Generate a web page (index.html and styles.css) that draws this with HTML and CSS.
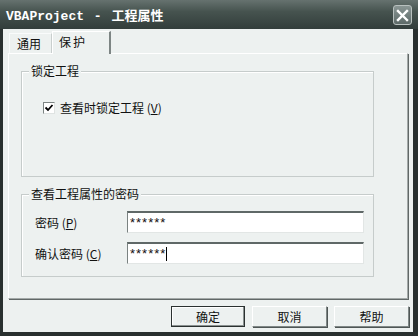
FILE: index.html
```html
<!DOCTYPE html>
<html lang="zh-CN">
<head>
<meta charset="UTF-8">
<title>VBAProject - 工程属性</title>
<link rel="stylesheet" href="styles.css">
</head>
<body>

<div class="window">
  <div class="titlebar">
    <span class="title">VBAProject - 工程属性</span>
    <span class="close"><svg width="13" height="13" viewBox="0 0 13 13"><path d="M2 2L11 11M11 2L2 11" stroke="#fff" stroke-width="2.4" stroke-linecap="square"/></svg></span>
  </div>

  <div class="client">
    <div class="tabs">
      <div class="tab">通用</div>
      <div class="tab active">保护</div>
    </div>

    <div class="page">
      <div class="group g1">
        <div class="group-title">锁定工程</div>
        <label class="check-row">
          <span class="checkbox"><svg width="10" height="10" viewBox="0 0 10 10"><path d="M1.5 4.5L4 7L8.5 2" fill="none" stroke="#000" stroke-width="1.8"/></svg></span>
          <span>查看时锁定工程 (<u>V</u>)</span>
        </label>
      </div>

      <div class="group g2">
        <div class="group-title">查看工程属性的密码</div>
        <div class="field">
          <span class="field-label">密码 (<u>P</u>)</span>
          <span class="input">******</span>
        </div>
        <div class="field">
          <span class="field-label">确认密码 (<u>C</u>)</span>
          <span class="input">******<span class="caret"></span></span>
        </div>
      </div>
    </div>

    <div class="buttons">
      <div class="btn default">确定</div>
      <div class="btn">取消</div>
      <div class="btn">帮助</div>
    </div>
  </div>
</div>

</body>
</html>
```

FILE: styles.css
```css
html,body { margin:0; padding:0; background:#262e2d; font-family:"Noto Sans CJK SC","Liberation Sans",sans-serif; font-size:12px; color:#111; }
.window { width:418px; height:336px; background:#29302f; display:flex; flex-direction:column; }

.titlebar { height:29px; flex:none; display:flex; align-items:center; justify-content:space-between; padding:0 6px;
  background:linear-gradient(#66726f,#46534f 40%,#323d3b); }
.title { color:#fff; font-family:"Liberation Mono","Noto Sans CJK SC",monospace; font-weight:bold; font-size:13px; word-spacing:2px; }
.close { width:17px; height:18px; margin-top:1px; border:1px solid #b8c0be; border-radius:3px; display:flex; align-items:center; justify-content:center;
  background:linear-gradient(#8a9694,#5d6a68); }

.client { flex:1; margin:0 5px 4px 3px; background:#edf1f0; padding:3px 0 0 5px; }

.tabs { display:flex; height:21px; padding-left:1px; align-items:flex-end; }
.tab { height:19px; line-height:19px; padding:0 10px 0 7px; border:1px solid #f9fbfb; border-bottom:none; border-right:1px solid #c9cfce; }
.tab.active { position:relative; height:22px; line-height:20px; margin-bottom:-1px; padding:0 22px 0 6px; background:#edf1f0; letter-spacing:2px;
  border-left:1px solid #fff; border-top:1px solid #fff; border-right:2px solid #7d8584; }

.page { width:400px; height:246px; box-sizing:border-box; border:1px solid #fff; border-right:1px solid #a3a9a8; border-bottom:1px solid #a3a9a8;
  box-shadow:1px 1px 0 #616867; padding:17px 0 0 12px; }

.group { width:353px; box-sizing:border-box; border:1px solid #c6cccb; box-shadow:inset 1px 1px 0 #fff; }
.group-title { width:fit-content; margin:-8px 0 0 7px; padding:0 2px; line-height:14px; background:#edf1f0; }
.g1 { height:106px; }
.g2 { height:83px; margin-top:17px; }

.check-row { display:flex; align-items:center; gap:5px; margin:23px 0 0 21px; line-height:14px; }
.checkbox { width:10px; height:10px; border:1px solid #7c8483; border-right-color:#dfe3e2; border-bottom-color:#dfe3e2; background:#fff;
  display:flex; align-items:center; justify-content:center; }
u { text-decoration:underline; text-underline-offset:1px; }

.field { display:flex; align-items:center; margin:10px 0 0 13px; }
.field + .field { margin-top:9px; }
.field-label { width:92px; }
.input { width:237px; height:22px; box-sizing:border-box; background:#fff; border-top:2px solid #5f6867; border-left:1px solid #7a8281;
  border-right:1px solid #e2e6e5; border-bottom:1px solid #e2e6e5; padding-left:2px; display:flex; align-items:center;
  font-family:"Liberation Sans",sans-serif; font-size:13px; letter-spacing:1px; }
.caret { width:1px; height:14px; background:#000; margin-left:0; }

.buttons { display:flex; justify-content:flex-end; gap:7px; width:401px; margin-top:7px; }
.btn { width:75px; height:21px; box-sizing:border-box; display:flex; align-items:center; justify-content:center;
  border:1px solid #fff; border-right-color:#7f8786; border-bottom-color:#7f8786; box-shadow:1px 1px 0 #4f5655; background:#edf1f0; }
.btn.default { width:74px; border:1px solid #2b3130; box-shadow:inset -1px -1px 0 #8a9190, inset 1px 1px 0 #fff; }
```
